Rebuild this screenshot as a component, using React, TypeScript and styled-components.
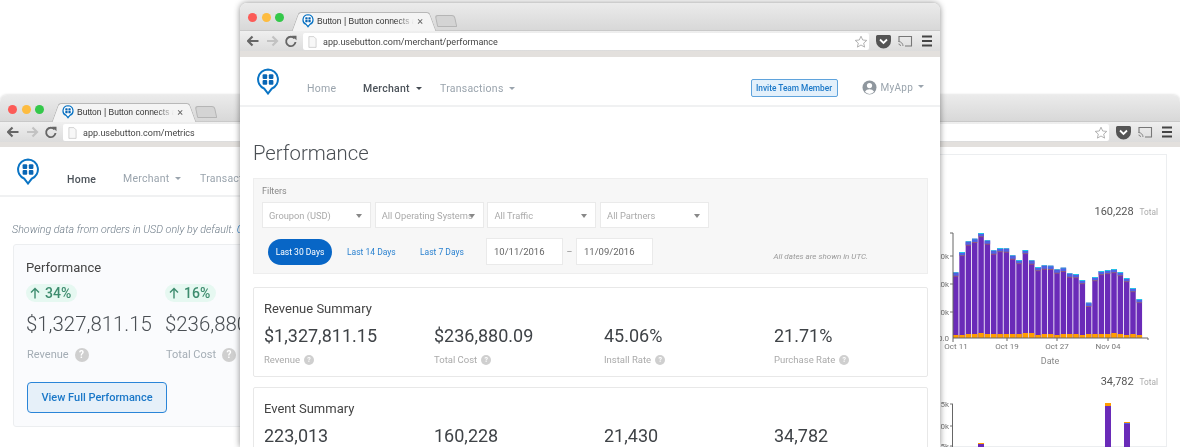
import React, { FunctionComponent } from "react";
import styled, { createGlobalStyle } from "styled-components";

const GlobalStyle = createGlobalStyle`
  html, body {
    margin: 0;
    background: #fff;
  }
  * {
    box-sizing: border-box;
  }
  body {
    font-family: Roboto, "Liberation Sans", sans-serif;
  }
`;

const BARS = [
  247, 186, 154, 146, 129, 151, 181, 174, 175, 196, 210, 180, 211, 231, 226, 227, 238, 233, 250, 252, 270, 338, 261,
  243, 240, 237, 246, 264, 294, 327,
];
const ORANGE = [3, 3, 4, 4, 5, 4, 4, 4, 4, 4, 4, 5, 5, 3, 4, 4, 3, 4, 4, 4, 3, 4, 4, 4, 4, 5, 4, 3, 4, 3];

const LogoMark = ({ width, height, stroke }: { width: number; height: number; stroke: number }) => (
  <svg width={width} height={height} viewBox="0 0 24 27">
    <path
      d="M12 1.500a10 10 0 0 1 3.600 19.300L12 25.500l-3.600-4.700A10 10 0 0 1 12 1.500z"
      fill="#fff"
      stroke="#0a74c4"
      strokeWidth={stroke}
    />
    <rect x="6.600" y="6.300" width="4.600" height="4.600" rx="1" fill="#0a66b4" />
    <rect x="12.800" y="6.300" width="4.600" height="4.600" rx="1" fill="#0a66b4" />
    <rect x="6.600" y="12.100" width="4.600" height="4.600" rx="1" fill="#0a66b4" />
    <rect x="12.800" y="12.100" width="4.600" height="4.600" rx="1" fill="#0a66b4" />
  </svg>
);

const ToolbarLeftIcons = () => (
  <svg width="50" height="16" viewBox="0 0 50 16">
    <path d="M1 8h10.500M5.500 3.500 1 8l4.500 4.500" fill="none" stroke="#666" strokeWidth="2.200" />
    <path d="M30 8H20M25.500 3.500 30 8l-4.500 4.500" fill="none" stroke="#c2c2c2" strokeWidth="2.200" />
    <path d="M47.500 5.500A4.700 4.700 0 1 0 48.500 9" fill="none" stroke="#666" strokeWidth="1.900" />
    <path d="M45 2.800h4.500v4.500z" fill="#666" />
  </svg>
);

const ToolbarRightIcons = () => (
  <svg width="57" height="16" viewBox="0 0 57 16">
    <path d="M1.500 2h12A1.500 1.500 0 0 1 15 3.500V8A7.500 7.500 0 0 1 0 8V3.500A1.500 1.500 0 0 1 1.500 2z" fill="#555" />
    <path d="M4 6.500 7.500 10 11 6.500" fill="none" stroke="#fff" strokeWidth="1.800" />
    <path d="M23 9V3.500h12.500v9.500H29" fill="none" stroke="#777" strokeWidth="1.100" />
    <path d="M22.500 8.500A4.500 4.500 0 0 1 27 13M22.500 11a2 2 0 0 1 2 2" fill="none" stroke="#888" strokeWidth="1" />
    <path d="M46 3.500h10M46 8h10M46 12.500h10" stroke="#444" strokeWidth="2" />
  </svg>
);

const Star = () => (
  <svg width="14" height="14" viewBox="0 0 14 14">
    <path
      d="M7 1.200 8.700 5l4.100.4-3.100 2.700.9 4-3.600-2.100-3.600 2.100.9-4L1.200 5.400 5.300 5z"
      fill="#fff"
      stroke="#aaa"
      strokeWidth="0.900"
    />
  </svg>
);

const PageGlyph = () => (
  <svg width="9" height="12" viewBox="0 0 10 13">
    <path d="M1 .5h5.500L9 3v9.500H1z" fill="#f8f8f8" stroke="#c4c4c4" strokeWidth="0.800" />
  </svg>
);

const Avatar = () => (
  <svg width="15" height="15" viewBox="0 0 15 15">
    <circle cx="7.500" cy="7.500" r="7" fill="#8f979e" />
    <circle cx="7.500" cy="5.600" r="2.600" fill="#fff" />
    <path d="M2.900 11.800c1-1.900 2.700-2.600 4.600-2.600s3.600.7 4.600 2.600a6 6 0 0 1-9.200 0z" fill="#fff" />
  </svg>
);

const UpArrow = () => (
  <svg width="10" height="12" viewBox="0 0 10 12">
    <path d="M5 11.500V1.500M1 5.500l4-4 4 4" fill="none" stroke="#3d8c6e" strokeWidth="1.400" />
  </svg>
);

type ChromeProps = {
  url: string;
  compact?: boolean;
};

const BrowserChrome: FunctionComponent<ChromeProps> = ({ url, compact }) => (
  <>
    <TitleBar compact={compact}>
      <Lights>
        <Light color="#fc5b57" />
        <Light color="#fdbc40" />
        <Light color="#34c84a" />
      </Lights>
      <Tab>
        <LogoMark width={12} height={13.500} stroke={2.500} />
        <TabTitle>Button | Button connects apps</TabTitle>
        <TabClose>×</TabClose>
      </Tab>
      <NewTab />
    </TitleBar>
    <Toolbar compact={compact}>
      <ToolbarLeftIcons />
      <AddressBar>
        <PageGlyph />
        <Url>{url}</Url>
        <StarSlot>
          <Star />
        </StarSlot>
      </AddressBar>
      <ToolbarRightIcons />
    </Toolbar>
  </>
);

type NavProps = {
  active: "Home" | "Merchant";
  children?: React.ReactNode;
};

const TopNav: FunctionComponent<NavProps> = ({ active, children }) => (
  <Nav>
    <LogoSlot>
      <LogoMark width={24} height={27} stroke={2} />
    </LogoSlot>
    <NavLinks>
      <NavLink active={active === "Home"} nudge={active === "Home"}>
        Home
      </NavLink>
      <NavLink active={active === "Merchant"}>
        Merchant <Caret dark={active === "Merchant"} />
      </NavLink>
      <NavLink>
        Transactions <Caret />
      </NavLink>
    </NavLinks>
    {children}
  </Nav>
);

const HelpDot = ({ big }: { big?: boolean }) => <Help big={big}>?</Help>;

const BigChart = () => (
  <svg width="229" height="142" viewBox="937 225 229 142">
    {[256, 284, 312].map((y, i) => (
      <g key={y}>
        <line x1="950" x2="953" y1={y} y2={y} stroke="#777" />
        <text x="949" y={y + 3} fontSize="8" textAnchor="end" fill="#777">
          {`${30 - i * 10}k`}
        </text>
      </g>
    ))}
    <text x="949" y="341" fontSize="8" textAnchor="end" fill="#777">
      0.0
    </text>
    {BARS.map((top, i) => {
      const x = 953 + i * 6.33;
      const y = 190 + top / 3;
      return (
        <g key={i}>
          <rect x={x} y={y} width="5.500" height={338 - y} fill="#6a2bb8" />
          <rect x={x} y={y} width="5.500" height="1" fill="#1fc4e8" />
          <rect x={x} y={y + 1} width="5.500" height="2.500" fill="#4d62e6" />
          <rect x={x} y={y + 3.500} width="5.500" height="0.600" fill="#b0704a" />
          <rect x={x} y={338 - ORANGE[i]} width="5.500" height={ORANGE[i]} fill="#ff9d00" />
        </g>
      );
    })}
    <path d="M950 233h3v105h195v2M953 338v4M1007 338v3M1057 338v3M1108 338v3" fill="none" stroke="#666" />
    {[
      ["Oct 11", 956],
      ["Oct 19", 1007],
      ["Oct 27", 1057],
      ["Nov 04", 1108],
    ].map(([label, x]) => (
      <text key={label} x={x} y="349" fontSize="8" textAnchor="middle" fill="#777">
        {label}
      </text>
    ))}
    <text x="1050" y="364" fontSize="9" textAnchor="middle" fill="#888">
      Date
    </text>
  </svg>
);

const SmallChart = () => (
  <svg width="229" height="52" viewBox="937 395 229 52">
    {[
      ["35k", 404],
      ["30k", 426],
      ["25k", 446],
    ].map(([label, y]) => (
      <g key={label}>
        <line x1="950" x2="953" y1={y} y2={y} stroke="#777" />
        <text x="949" y={Number(y) + 3} fontSize="8" textAnchor="end" fill="#777">
          {label}
        </text>
      </g>
    ))}
    <line x1="952.500" x2="952.500" y1="404" y2="447" stroke="#666" />
    <rect x="978" y="443.500" width="6" height="4" fill="#6a2bb8" />
    <rect x="978" y="443" width="6" height="1" fill="#ff9d00" />
    <rect x="1105" y="403" width="6" height="44" fill="#6a2bb8" />
    <rect x="1105" y="403" width="6" height="3" fill="#ff9d00" />
    <rect x="1124" y="422" width="6" height="25" fill="#6a2bb8" />
    <rect x="1124" y="422" width="6" height="1" fill="#ff9d00" />
    <rect x="1124" y="423" width="6" height="1" fill="#4d62e6" />
  </svg>
);

const summaries = [
  {
    title: "Revenue Summary",
    metrics: [
      ["$1,327,811.15", "Revenue"],
      ["$236,880.09", "Total Cost"],
      ["45.06%", "Install Rate"],
      ["21.71%", "Purchase Rate"],
    ],
  },
  {
    title: "Event Summary",
    metrics: [
      ["223,013", "Clicks"],
      ["160,228", "Installs"],
      ["21,430", "Opens"],
      ["34,782", "Purchases"],
    ],
  },
];

export default function App() {
  return (
    <Desktop>
      <GlobalStyle />
      <BackWindow>
        <BrowserChrome url="app.usebutton.com/metrics" compact />
        <BackBody>
          <BackMain>
            <TopNav active="Home" />
            <Disclaimer>
              Showing data from orders in USD only by default. <a>Change currency</a>
            </Disclaimer>
            <PerformanceCard>
              <PerformanceTitle>Performance</PerformanceTitle>
              <PerformanceStats>
                <div>
                  <Growth>
                    <UpArrow />
                    34%
                  </Growth>
                  <BigValue>$1,327,811.15</BigValue>
                  <BigLabel>
                    Revenue <HelpDot big />
                  </BigLabel>
                </div>
                <div>
                  <Growth>
                    <UpArrow />
                    16%
                  </Growth>
                  <BigValue>$236,880.09</BigValue>
                  <BigLabel>
                    Total Cost <HelpDot big />
                  </BigLabel>
                </div>
              </PerformanceStats>
              <ViewButton>View Full Performance</ViewButton>
            </PerformanceCard>
          </BackMain>
          <ChartCard>
            <ChartTotal>
              160,228 <small>Total</small>
            </ChartTotal>
            <BigChart />
            <ChartTotal second>
              34,782 <small>Total</small>
            </ChartTotal>
            <SmallChart />
          </ChartCard>
        </BackBody>
      </BackWindow>

      <FrontWindow>
        <BrowserChrome url="app.usebutton.com/merchant/performance" />
        <TopNav active="Merchant">
          <InviteButton>Invite Team Member</InviteButton>
          <Account>
            <Avatar />
            MyApp
            <Caret />
          </Account>
        </TopNav>
        <Page>
          <PageTitle>Performance</PageTitle>
          <Filters>
            <FiltersLabel>Filters</FiltersLabel>
            <SelectRow>
              <Select>Groupon (USD)</Select>
              <Select>All Operating Systems</Select>
              <Select>All Traffic</Select>
              <Select>All Partners</Select>
            </SelectRow>
            <RangeRow>
              <RangePill>Last 30 Days</RangePill>
              <RangeLink width={73}>Last 14 Days</RangeLink>
              <RangeLink width={81}>Last 7 Days</RangeLink>
              <DateInput>10/11/2016</DateInput>
              <DateDash>–</DateDash>
              <DateInput>11/09/2016</DateInput>
              <UtcNote>All dates are shown in UTC.</UtcNote>
            </RangeRow>
          </Filters>
          {summaries.map(({ title, metrics }) => (
            <SummaryCard key={title}>
              <SummaryTitle>{title}</SummaryTitle>
              <MetricGrid>
                {metrics.map(([value, label]) => (
                  <div key={label}>
                    <MetricValue>{value}</MetricValue>
                    <MetricLabel>
                      {label} <HelpDot />
                    </MetricLabel>
                  </div>
                ))}
              </MetricGrid>
            </SummaryCard>
          ))}
        </Page>
      </FrontWindow>
    </Desktop>
  );
}

const Desktop = styled.div`
  position: relative;
  width: 1180px;
  height: 447px;
  overflow: hidden;
  background: #fff;
  filter: blur(0.3px);
`;

const Window = styled.div`
  position: absolute;
  display: flex;
  flex-direction: column;
  overflow: hidden;
  background: #fff;
  border-radius: 7px 7px 0 0;
`;

const BackWindow = styled(Window)`
  left: 0;
  top: 95px;
  width: 1180px;
  height: 352px;
  box-shadow: 0 0 3px rgba(0, 0, 0, 0.2);
`;

const FrontWindow = styled(Window)`
  left: 240px;
  top: 3px;
  width: 700px;
  height: 444px;
  box-shadow: 0 0 6px rgba(0, 0, 0, 0.45);
`;

const TitleBar = styled.div<{ compact?: boolean }>`
  display: flex;
  align-items: flex-end;
  flex: none;
  height: ${({ compact }) => (compact ? 26 : 27)}px;
  padding-left: 8px;
  background: linear-gradient(#ebebeb, #d8d8d8);
`;

const Lights = styled.div`
  display: flex;
  gap: 4.5px;
  align-self: flex-start;
  margin-top: 10px;
`;

const Light = styled.span<{ color: string }>`
  width: 9px;
  height: 9px;
  border-radius: 50%;
  background: ${({ color }) => color};
`;

const Tab = styled.div`
  position: relative;
  z-index: 0;
  display: flex;
  align-items: center;
  gap: 3px;
  width: 134px;
  height: 18px;
  margin-left: 13px;
  padding: 0 8px 0 5px;

  &::before,
  &::after {
    content: "";
    position: absolute;
    z-index: -1;
    top: 0;
    bottom: -1px;
    width: 60%;
    background: #f4f4f4;
    border: 1px solid #b8b8b8;
    border-bottom: none;
  }
  &::before {
    left: -2px;
    border-right: none;
    border-radius: 3px 0 0 0;
    transform: skewX(-20deg);
  }
  &::after {
    right: -2px;
    border-left: none;
    border-radius: 0 3px 0 0;
    transform: skewX(20deg);
  }

  svg {
    flex: none;
  }
`;

const TabTitle = styled.span`
  flex: 1;
  overflow: hidden;
  white-space: nowrap;
  font-family: "Liberation Sans", sans-serif;
  font-size: 8.5px;
  color: #333;
  mask-image: linear-gradient(90deg, #000 82%, transparent);
`;

const TabClose = styled.span`
  font-size: 11px;
  line-height: 1;
  color: #666;
`;

const NewTab = styled.div`
  width: 20px;
  height: 12px;
  margin: 0 0 3px 5px;
  background: #d4d4d4;
  border: 1px solid #b5b5b5;
  border-radius: 3px 3px 1px 1px;
  transform: skewX(12deg);
`;

const Toolbar = styled.div<{ compact?: boolean }>`
  display: flex;
  align-items: flex-start;
  flex: none;
  gap: 6px;
  height: ${({ compact }) => (compact ? 26 : 27)}px;
  padding: 2px 7px 0 7px;
  background: linear-gradient(#efefef 0, #dcdcdc 20px, #e3e0dd 20px);
  border-top: 1px solid #c9c9c9;

  svg {
    flex: none;
  }
`;

const AddressBar = styled.div`
  display: flex;
  align-items: center;
  flex: 1;
  gap: 5px;
  height: 17px;
  padding: 0 1px 0 5px;
  margin-right: 1px;
  background: #fff;
  border-radius: 2px;
`;

const Url = styled.span`
  flex: 1;
  padding-left: 1px;
  font-size: 9px;
  color: #444;
`;

const StarSlot = styled.span`
  display: flex;
`;

const Nav = styled.div`
  display: flex;
  align-items: flex-start;
  flex: none;
  height: 50px;
  padding: 11px 16px 0;
  border-bottom: 2px solid #f0f1f2;
`;

const LogoSlot = styled.div`
  width: 51px;
  flex: none;
`;

const NavLinks = styled.div`
  display: grid;
  grid-template-columns: 56px 77px auto;
  flex: 1;
  padding-top: 14px;
`;

const NavLink = styled.span<{ active?: boolean; nudge?: boolean }>`
  font-size: 10.5px;
  line-height: 13px;
  letter-spacing: 0.25px;
  white-space: nowrap;
  font-weight: ${({ active }) => (active ? 500 : 400)};
  color: ${({ active }) => (active ? "#4c535a" : "#9aa4ad")};
  margin-top: ${({ nudge }) => (nudge ? "1px" : "0")};
`;

const Caret = styled.i<{ dark?: boolean }>`
  display: inline-block;
  vertical-align: middle;
  width: 0;
  height: 0;
  margin: 0 0 2px 3px;
  border: 3px solid transparent;
  border-bottom: none;
  border-top-color: ${({ dark }) => (dark ? "#444b52" : "#9aa4ad")};
`;

const InviteButton = styled.button`
  flex: none;
  width: 87px;
  height: 18px;
  margin: 11px 24px 0 0;
  padding: 0;
  font-family: inherit;
  font-size: 8.3px;
  font-weight: 500;
  color: #1b78c8;
  background: #e3f0fb;
  border: 1px solid #5fa3dc;
  border-radius: 2px;
`;

const Account = styled.div`
  display: flex;
  align-items: center;
  flex: none;
  gap: 4px;
  margin-top: 12px;
  font-size: 10px;
  letter-spacing: 0.25px;
  color: #9aa4ad;

  i {
    margin: 0 0 2px 1px;
  }
`;

const Page = styled.div`
  padding: 0 12px 0 13px;
`;

const PageTitle = styled.h1`
  margin: 33px 0 12px;
  font-size: 20.3px;
  line-height: 26px;
  font-weight: 300;
  color: #4a4f54;
`;

const Filters = styled.div`
  height: 96px;
  padding: 7px 8px;
  background: #f7f7f7;
  border: 1px solid #eee;
`;

const FiltersLabel = styled.div`
  font-size: 9px;
  line-height: 11px;
  color: #888;
`;

const SelectRow = styled.div`
  display: flex;
  gap: 3.7px;
  margin-top: 5px;
`;

const Select = styled.div`
  position: relative;
  width: 109px;
  height: 26px;
  padding-left: 6px;
  font-size: 9.3px;
  line-height: 25px;
  white-space: nowrap;
  color: #aaa;
  background: #fff;
  border: 1px solid #eaeaea;

  &::after {
    content: "";
    position: absolute;
    top: 11px;
    right: 8px;
    border: 3px solid transparent;
    border-bottom: none;
    border-top: 4px solid #888;
  }
`;

const RangeRow = styled.div`
  display: flex;
  align-items: center;
  height: 27px;
  margin-top: 10px;
  padding-left: 6px;
`;

const RangePill = styled.span`
  width: 64px;
  height: 26px;
  font-size: 8.5px;
  line-height: 26px;
  text-align: center;
  color: #fff;
  background: #0866c6;
  border-radius: 13px;
`;

const RangeLink = styled.span<{ width: number }>`
  width: ${({ width }) => width}px;
  padding-left: 15px;
  font-size: 8.5px;
  white-space: nowrap;
  color: #2b82d0;
`;

const DateInput = styled.span`
  flex: none;
  width: 77px;
  height: 27px;
  padding-left: 7px;
  font-size: 9.5px;
  line-height: 26px;
  color: #666;
  background: #fff;
  border: 1px solid #eaeaea;
`;

const DateDash = styled.span`
  width: 13px;
  font-size: 9px;
  text-align: center;
  color: #888;
`;

const UtcNote = styled.span`
  margin: 10px 0 0 auto;
  padding-right: 51px;
  font-size: 8px;
  font-style: italic;
  white-space: nowrap;
  color: #999;
`;

const SummaryCard = styled.section`
  height: 90px;
  margin-top: 13px;
  padding: 13px 10px 0;
  background: #fff;
  border: 1px solid #e8e8e8;
  border-radius: 2px;

  & + & {
    margin-top: 10px;
  }
`;

const SummaryTitle = styled.h2`
  margin: 0;
  font-size: 13px;
  line-height: 16px;
  font-weight: 400;
  color: #444;
`;

const MetricGrid = styled.div`
  display: grid;
  grid-template-columns: repeat(4, 170px);
  margin-top: 7px;
`;

const MetricValue = styled.div`
  font-size: 18px;
  line-height: 24px;
  color: #3f4347;
`;

const MetricLabel = styled.div`
  display: flex;
  align-items: center;
  gap: 4px;
  margin-top: 6px;
  font-size: 9.5px;
  line-height: 12px;
  color: #aaa;
`;

const Help = styled.span<{ big?: boolean }>`
  display: inline-block;
  width: ${({ big }) => (big ? 14 : 10)}px;
  height: ${({ big }) => (big ? 14 : 10)}px;
  font-size: ${({ big }) => (big ? 10 : 7)}px;
  font-weight: 700;
  line-height: ${({ big }) => (big ? 14 : 10)}px;
  text-align: center;
  color: #fff;
  background: #cfcfcf;
  border-radius: 50%;
`;

const BackBody = styled.div`
  display: flex;
  flex: 1;
  min-height: 0;
`;

const BackMain = styled.div`
  flex: none;
  width: 936px;
`;

const Disclaimer = styled.p`
  margin: 26px 0 0 12px;
  font-size: 10.7px;
  line-height: 14px;
  font-style: italic;
  font-weight: 300;
  white-space: nowrap;
  color: #6e7c88;

  a {
    color: #1b78c8;
  }
`;

const PerformanceCard = styled.section`
  height: 183px;
  margin: 7px 0 0 13px;
  padding: 15px 12px 0;
  background: #fafbfd;
  border: 1px solid #eceef0;
  border-radius: 3px;
`;

const PerformanceTitle = styled.h2`
  margin: 0;
  font-size: 13px;
  line-height: 16px;
  font-weight: 400;
  color: #444;
`;

const PerformanceStats = styled.div`
  display: grid;
  grid-template-columns: 139px 139px;
  margin-top: 8px;
`;

const Growth = styled.span`
  display: inline-flex;
  align-items: center;
  gap: 5px;
  height: 18px;
  width: 51px;
  padding-left: 4px;
  font-size: 14px;
  font-weight: 500;
  line-height: 18px;
  color: #3d8c6e;
  background: #e6f8f1;
  border-radius: 9px;
`;

const BigValue = styled.div`
  margin-top: 6px;
  font-size: 20.4px;
  line-height: 30px;
  font-weight: 300;
  white-space: nowrap;
  color: #4a4f54;
`;

const BigLabel = styled.div`
  display: flex;
  align-items: center;
  gap: 6px;
  margin-top: 9px;
  margin-left: 1px;
  font-size: 11px;
  line-height: 14px;
  color: #a4adb5;
`;

const ViewButton = styled.button`
  display: block;
  width: 140px;
  height: 31px;
  margin: 20px 0 0 1px;
  padding: 0;
  font-family: inherit;
  font-size: 11px;
  font-weight: 500;
  color: #1b78c8;
  background: #e6f0f9;
  border: 1px solid #2a85d8;
  border-radius: 4px;
`;

const ChartCard = styled.aside`
  flex: none;
  width: 231px;
  margin-top: 7px;
  border: 1px solid #eceef0;

  svg {
    display: block;
  }
`;

const ChartTotal = styled.div<{ second?: boolean }>`
  height: 16px;
  margin-top: ${({ second }) => (second ? "7px" : "49px")};
  margin-bottom: 5px;
  padding-right: 8px;
  font-size: 11px;
  line-height: 16px;
  text-align: right;
  color: #555;

  small {
    margin-left: 3px;
    font-size: 8.3px;
    color: #aaa;
  }
`;
